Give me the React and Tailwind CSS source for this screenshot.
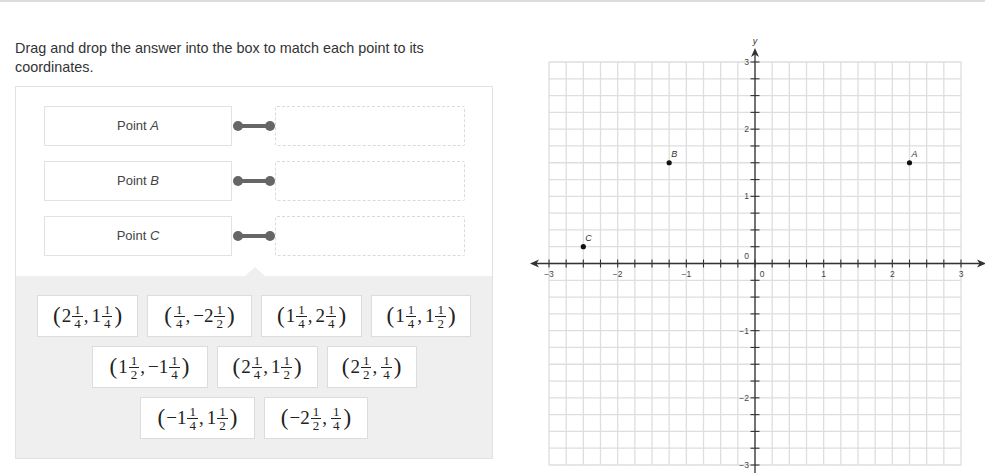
import React from 'react';

const serif = { fontFamily: '"Liberation Serif", "DejaVu Serif", serif' };

const Frac = ({ den }) => (
  <span className="inline-flex flex-col items-center align-middle leading-[10px] text-[13px] mx-[1px] relative top-[1px]">
    <span className="px-[2px] pb-[1px]">1</span>
    <span className="px-[2px] pt-[2px] border-t border-[#222]">{den}</span>
  </span>
);

const Num = ({ whole, den }) => (
  <span className="inline-flex items-center">
    {whole && <span>{whole}</span>}
    <Frac den={den} />
  </span>
);

const rows = [
  [
    { w: 'w-[101px]', a: ['2', 4], b: ['1', 4] },
    { w: 'w-[105px]', a: ['', 4], b: ['−2', 2] },
    { w: 'w-[101px]', a: ['1', 4], b: ['2', 4] },
    { w: 'w-[100px]', a: ['1', 4], b: ['1', 2] },
  ],
  [
    { w: 'w-[116px]', a: ['1', 2], b: ['−1', 4] },
    { w: 'w-[101px]', a: ['2', 4], b: ['1', 2] },
    { w: 'w-[90px]', a: ['2', 2], b: ['', 4] },
  ],
  [
    { w: 'w-[115px]', a: ['−1', 4], b: ['1', 2] },
    { w: 'w-[104px]', a: ['−2', 2], b: ['', 4] },
  ],
];

const Chip = ({ chip }) => (
  <div
    className={`${chip.w} h-[42px] bg-white border border-[#dcdcdc] flex items-center justify-center text-[19px] text-[#222]`}
    style={serif}
  >
    <span className="text-[23px] leading-none -mt-[1px] mr-[1px]">(</span>
    <Num whole={chip.a[0]} den={chip.a[1]} />
    <span className="mr-[3px]">,</span>
    <Num whole={chip.b[0]} den={chip.b[1]} />
    <span className="text-[23px] leading-none -mt-[1px] ml-[1px]">)</span>
  </div>
);

const PointRow = ({ label }) => (
  <div className="flex items-center h-[40px]">
    <div className="w-[188px] h-full border border-[#e2e2e2] flex items-center justify-center text-[13px] text-[#444]">
      Point&nbsp;<i>{label}</i>
    </div>
    <div className="w-[43px] flex items-center justify-center">
      <svg width="43" height="12" viewBox="0 0 43 12">
        <line x1="6" y1="6" x2="38" y2="6" stroke="#666" strokeWidth="4" />
        <circle cx="6" cy="6" r="5" fill="#666" />
        <circle cx="38" cy="6" r="5" fill="#666" />
      </svg>
    </div>
    <div className="w-[190px] h-full border border-dashed border-[#dadada] rounded-[2px]" />
  </div>
);

const X0 = 549;
const X1 = 961;
const Y0 = 62;
const Y1 = 465;
const dx = (X1 - X0) / 24;
const dy = (Y1 - Y0) / 24;
const ox = 755;
const oy = 263.5;
const px = v => ox + v * dx * 4;
const py = v => oy - v * dy * 4;

const Graph = () => {
  const idx = Array.from({ length: 25 }, (_, i) => i);
  return (
    <svg width="465" height="443" viewBox="520 30 465 443" className="block" style={{ fontFamily: '"Liberation Sans", Arial, sans-serif' }}>
      {idx.map(i => (
        <line key={'v' + i} x1={X0 + i * dx} y1={Y0} x2={X0 + i * dx} y2={Y1} stroke="#dedede" strokeWidth="1.3" />
      ))}
      {idx.map(i => (
        <line key={'h' + i} x1={X0} y1={Y0 + i * dy} x2={X1} y2={Y0 + i * dy} stroke="#dedede" strokeWidth="1.3" />
      ))}
      <line x1="534" y1={oy} x2="983" y2={oy} stroke="#333" strokeWidth="1.3" />
      <line x1={ox} y1="51" x2={ox} y2="473" stroke="#333" strokeWidth="1.3" />
      <path d={`M530 ${oy} L539 ${oy - 4} L536.5 ${oy} L539 ${oy + 4} Z`} fill="#333" />
      <path d={`M986 ${oy} L977 ${oy - 4} L979.5 ${oy} L977 ${oy + 4} Z`} fill="#333" />
      <path d={`M${ox} 48 L${ox - 4} 57 L${ox} 54.5 L${ox + 4} 57 Z`} fill="#333" />
      {idx.map(i => (
        <line key={'tx' + i} x1={X0 + i * dx} y1={oy - 4} x2={X0 + i * dx} y2={oy + 4} stroke="#333" strokeWidth="1.1" />
      ))}
      {idx.map(i => (
        <line key={'ty' + i} x1={ox - 4.5} y1={Y0 + i * dy} x2={ox + 4.5} y2={Y0 + i * dy} stroke="#333" strokeWidth="1.1" />
      ))}
      {[-3, -2, -1, 1, 2, 3].map(v => (
        <text key={'lx' + v} x={px(v)} y={oy + 13} fontSize="8.5" fill="#444" textAnchor="middle">
          {v < 0 ? '−' + Math.abs(v) : v}
        </text>
      ))}
      <text x={ox + 7} y={oy + 13} fontSize="8.5" fill="#444" textAnchor="middle">0</text>
      {[-3, -2, -1, 1, 2, 3].map(v => (
        <text key={'ly' + v} x={ox - 6} y={py(v) + 3} fontSize="8.5" fill="#444" textAnchor="end">
          {v < 0 ? '−' + Math.abs(v) : v}
        </text>
      ))}
      <text x={ox - 6} y={oy - 5} fontSize="8.5" fill="#444" textAnchor="end">0</text>
      <text x={ox} y="44" fontSize="9" fill="#333" textAnchor="middle" fontStyle="italic">y</text>
      {[
        ['A', 2.25, 1.5],
        ['B', -1.25, 1.5],
        ['C', -2.5, 0.25],
      ].map(([l, x, y]) => (
        <g key={l}>
          <circle cx={px(x)} cy={py(y)} r="2.6" fill="#111" />
          <text x={px(x) + 2} y={py(y) - 6} fontSize="9" fill="#333" fontStyle="italic">{l}</text>
        </g>
      ))}
    </svg>
  );
};

export default function App() {
  return (
    <div
      className="w-[985px] h-[473px] overflow-hidden bg-white border-t-2 border-[#dcdcdc] flex"
      style={{ fontFamily: '"Liberation Sans", Arial, sans-serif' }}
    >
      <div className="w-[493px] pl-[15px] pt-[37px] shrink-0">
        <p className="text-[14.4px] leading-[19px] text-[#333] w-[470px]">
          Drag and drop the answer into the box to match each point to its coordinates.
        </p>
        <div className="mt-[9px] border border-[#e2e2e2] h-[373px] flex flex-col">
          <div className="pt-[19px] pl-[28px] flex flex-col gap-[15px] h-[189px]">
            <PointRow label="A" />
            <PointRow label="B" />
            <PointRow label="C" />
          </div>
          <div className="relative flex-1 bg-[#efefef] pt-[19px] flex flex-col items-center gap-[9px]">
            <div className="absolute -top-[9px] left-[229px] w-0 h-0 border-l-[10px] border-r-[10px] border-b-[9px] border-l-transparent border-r-transparent border-b-[#efefef]" />
            {rows.map((r, i) => (
              <div key={i} className="flex gap-[9px]">
                {r.map((c, j) => (
                  <Chip key={j} chip={c} />
                ))}
              </div>
            ))}
          </div>
        </div>
      </div>
      <div className="ml-[27px] mt-[28px]">
        <Graph />
      </div>
    </div>
  );
}
